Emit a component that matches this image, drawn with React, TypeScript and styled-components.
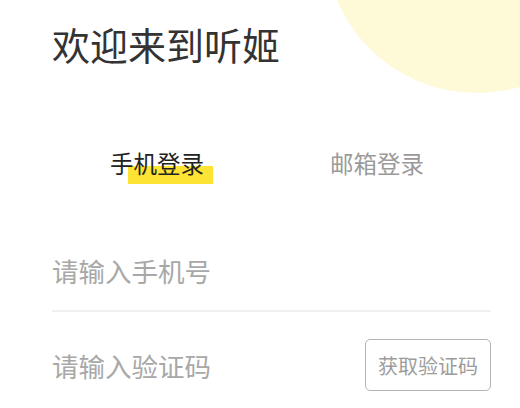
import React, { useState } from "react";
import styled, { createGlobalStyle } from "styled-components";

const GlobalStyle = createGlobalStyle`
  html, body {
    margin: 0;
    padding: 0;
    background: #fff;
  }
  body {
    font-family: "Noto Sans CJK SC", "Noto Sans", sans-serif;
  }
`;

const Page = styled.div`
  position: relative;
  overflow: hidden;
  width: 520px;
  height: 408px;
  box-sizing: border-box;
  padding: 0 29px 0 52px;
  background: #fff;
`;

const Bubble = styled.div`
  position: absolute;
  width: 304px;
  height: 304px;
  border-radius: 50%;
  left: 325px;
  top: -211px;
  background: #fef9d7;
`;

const Title = styled.h1`
  position: relative;
  margin: 0;
  padding-top: 21px;
  font-size: 38px;
  line-height: 46px;
  font-weight: 400;
  color: #333;
`;

const Tabs = styled.div`
  display: flex;
  margin: 80px 4px 0 -5px;
`;

const Tab = styled.button<{ $active?: boolean }>`
  flex: 1;
  display: flex;
  justify-content: center;
  padding: 0;
  border: none;
  background: transparent;
  font-family: inherit;
  font-size: 23.5px;
  line-height: 32px;
  color: ${(p) => (p.$active ? "#222" : "#9a9a9a")};
  cursor: pointer;
`;

const TabLabel = styled.span<{ $active?: boolean }>`
  position: relative;
  z-index: 0;
  &::after {
    content: "";
    display: ${(p) => (p.$active ? "block" : "none")};
    position: absolute;
    z-index: -1;
    left: 18px;
    right: -9px;
    top: 19px;
    height: 18px;
    background: #fde334;
  }
`;

const Form = styled.div`
  margin-top: 51px;
`;

const Field = styled.div<{ $line?: boolean }>`
  display: flex;
  align-items: center;
  height: ${(p) => (p.$line ? "80px" : "106px")};
  border-bottom: ${(p) => (p.$line ? "2px solid #f0f0f0" : "none")};
`;

const Input = styled.input`
  flex: 1;
  min-width: 0;
  border: none;
  outline: none;
  padding: 0;
  background: transparent;
  font-family: inherit;
  font-size: 26.5px;
  color: #333;
  &::placeholder {
    color: #a8a8a8;
  }
`;

const CodeButton = styled.button`
  flex: none;
  width: 126px;
  height: 52px;
  box-sizing: border-box;
  border: 1.5px solid #b3b3b3;
  border-radius: 5px;
  background: #fff;
  font-family: inherit;
  font-size: 20px;
  color: #9c9c9c;
  padding: 0;
`;

export default function App() {
  const [tab, setTab] = useState<"phone" | "mail">("phone");

  return (
    <Page>
      <GlobalStyle />
      <Bubble />
      <Title>欢迎来到听姬</Title>
      <Tabs>
        <Tab $active={tab === "phone"} onClick={() => setTab("phone")}>
          <TabLabel $active={tab === "phone"}>手机登录</TabLabel>
        </Tab>
        <Tab $active={tab === "mail"} onClick={() => setTab("mail")}>
          <TabLabel $active={tab === "mail"}>邮箱登录</TabLabel>
        </Tab>
      </Tabs>
      <Form>
        <Field $line>
          <Input placeholder="请输入手机号" />
        </Field>
        <Field>
          <Input placeholder="请输入验证码" />
          <CodeButton>获取验证码</CodeButton>
        </Field>
      </Form>
    </Page>
  );
}
